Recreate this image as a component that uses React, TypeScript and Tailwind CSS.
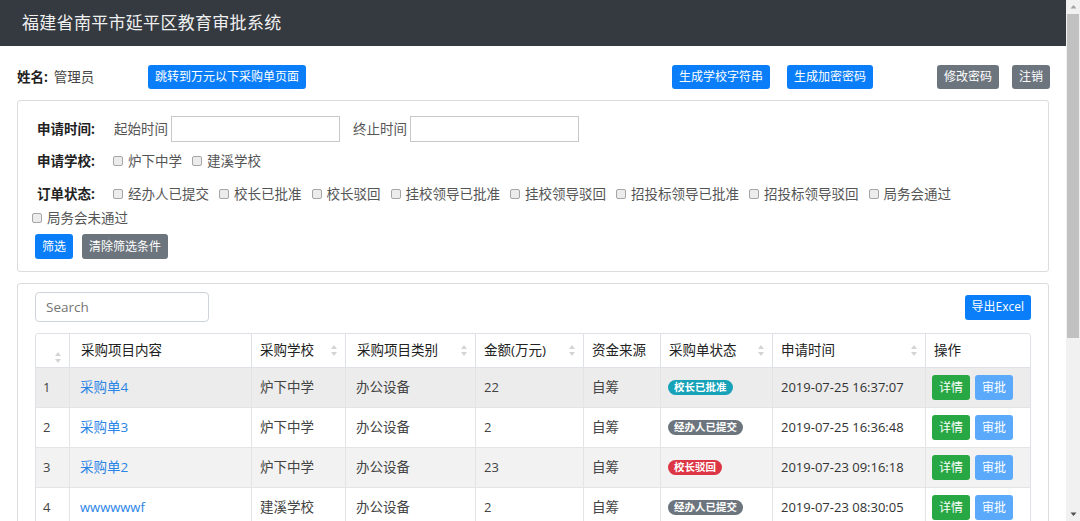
import React from "react";

const FONT = { fontFamily: '"Open Sans", "Noto Sans CJK SC", sans-serif' };

function Checkbox() {
  return <span className="inline-block w-[10px] h-[10px] border border-[#a6a6a6] rounded-[2px] bg-[#ececec] shrink-0" />;
}

function CheckItem({ label }: { label: string }) {
  return (
    <span className="flex items-center mr-[10px] h-[24px]">
      <Checkbox />
      <span className="ml-[5px]">{label}</span>
    </span>
  );
}

function SortIcon() {
  return (
    <svg width="6" height="11" viewBox="0 0 6 11" className="shrink-0">
      <path d="M3 0 L6 4 L0 4 Z" fill="#d4d4d4" />
      <path d="M3 11 L6 7 L0 7 Z" fill="#d4d4d4" />
    </svg>
  );
}

function Btn({ children, color, className = "" }: { children: React.ReactNode; color: string; className?: string }) {
  return (
    <span className={`inline-flex items-center justify-center px-[7px] rounded-[3px] text-white text-[12px] leading-none ${color} ${className}`}>
      {children}
    </span>
  );
}

const columns = [
  { title: "", w: "w-[33px]", sort: true },
  { title: "采购项目内容", w: "w-[182px]", sort: false },
  { title: "采购学校", w: "w-[94px]", sort: true },
  { title: "采购项目类别", w: "w-[130px]", sort: true },
  { title: "金额(万元)", w: "w-[108px]", sort: true },
  { title: "资金来源", w: "w-[77px]", sort: false },
  { title: "采购单状态", w: "w-[112px]", sort: true },
  { title: "申请时间", w: "w-[153px]", sort: true },
  { title: "操作", w: "w-[105px]", sort: false },
];

const rows = [
  { no: 1, name: "采购单4", school: "炉下中学", type: "办公设备", amount: "22", src: "自筹", status: "校长已批准", badge: "bg-[#17a2b8]", time: "2019-07-25 16:37:07", bg: "bg-[#ececec]" },
  { no: 2, name: "采购单3", school: "炉下中学", type: "办公设备", amount: "2", src: "自筹", status: "经办人已提交", badge: "bg-[#6c757d]", time: "2019-07-25 16:36:48", bg: "bg-white" },
  { no: 3, name: "采购单2", school: "炉下中学", type: "办公设备", amount: "23", src: "自筹", status: "校长驳回", badge: "bg-[#dc3545]", time: "2019-07-23 09:16:18", bg: "bg-[#f2f2f2]" },
  { no: 4, name: "wwwwwwf", school: "建溪学校", type: "办公设备", amount: "2", src: "自筹", status: "经办人已提交", badge: "bg-[#6c757d]", time: "2019-07-23 08:30:05", bg: "bg-white" },
];

const statuses = ["经办人已提交", "校长已批准", "校长驳回", "挂校领导已批准", "挂校领导驳回", "招投标领导已批准", "招投标领导驳回", "局务会通过", "局务会未通过"];

export default function App() {
  return (
    <div className="flex w-[1080px] h-[521px] overflow-hidden bg-white text-[#333]" style={FONT}>
      <div className="flex-1 min-w-0 flex flex-col">
        {/* Header */}
        <div className="h-[46px] bg-[#343a40] flex items-center pl-[22px] shrink-0">
          <span className="text-[17px] text-[#f0f0f0] tracking-[0.3px]">福建省南平市延平区教育审批系统</span>
        </div>

        <div className="px-[17px]">
          {/* User bar */}
          <div className="flex items-center h-[24px] mt-[19px] text-[13.5px]">
            <span className="w-[131px] flex items-center">
              <b className="font-bold text-[#222]">姓名:</b>
              <span className="ml-[6px] text-[#444]">管理员</span>
            </span>
            <Btn color="bg-[#0a7ef8]" className="h-[24px] px-[6px]">跳转到万元以下采购单页面</Btn>
            <div className="flex-1" />
            <Btn color="bg-[#0a7ef8]" className="h-[24px]">生成学校字符串</Btn>
            <Btn color="bg-[#0a7ef8]" className="h-[24px] ml-[17px]">生成加密密码</Btn>
            <Btn color="bg-[#6c757d]" className="h-[24px] ml-[64px]">修改密码</Btn>
            <Btn color="bg-[#6c757d]" className="h-[24px] ml-[13px] mr-[-1px]">注销</Btn>
          </div>

          {/* Filter card */}
          <div className="mt-[11px] border border-[#dcdcdc] rounded-[3px] pl-[14px] pr-[14px] pt-[15px] pb-[12px] text-[13.5px] text-[#555]">
            <div className="flex items-center h-[26px] pl-[5px]">
              <b className="w-[77px] font-bold text-[#222]">申请时间:</b>
              <span>起始时间</span>
              <span className="ml-[3px] w-[169px] h-[26px] border border-[#c8c8c8] bg-white" />
              <span className="ml-[13px]">终止时间</span>
              <span className="ml-[3px] w-[169px] h-[26px] border border-[#c8c8c8] bg-white" />
            </div>
            <div className="flex items-center h-[24px] mt-[7px] pl-[5px]">
              <b className="w-[76px] font-bold text-[#222]">申请学校:</b>
              <CheckItem label="炉下中学" />
              <CheckItem label="建溪学校" />
            </div>
            <div className="flex flex-wrap items-center mt-[9px]">
              <b className="w-[81px] pl-[5px] font-bold text-[#222] h-[24px] flex items-center">订单状态:</b>
              {statuses.map((s) => (
                <CheckItem key={s} label={s} />
              ))}
            </div>
            <div className="flex items-center mt-[4px] pl-[3px]">
              <Btn color="bg-[#0a7ef8]" className="h-[25px]">筛选</Btn>
              <Btn color="bg-[#6c757d]" className="h-[25px] ml-[9px]">清除筛选条件</Btn>
            </div>
          </div>

          {/* Table card */}
          <div className="mt-[11px] border border-[#dcdcdc] rounded-[3px] px-[17px] pt-[8px] pb-[20px]">
            <div className="flex items-center justify-between">
              <div className="w-[174px] h-[30px] border border-[#ced4da] rounded-[4px] flex items-center pl-[10px] text-[13.5px] text-[#757575]">
                Search
              </div>
              <Btn color="bg-[#0a7ef8]" className="h-[25px] text-[12.5px]">导出Excel</Btn>
            </div>

            <div className="mt-[11px] border border-[#dee2e6] rounded-[3px]">
              <div className="flex h-[34px] border-b border-[#dee2e6] text-[13.5px] text-[#222]">
                {columns.map((c, i) => (
                  <div
                    key={i}
                    className={`${c.w} shrink-0 flex justify-between pl-[8px] pr-[8px] ${i > 0 ? "border-l border-[#dee2e6]" : ""} ${i === 0 ? "items-end pb-[4px] pr-[5px] justify-end" : "items-center"}`}
                  >
                    {c.title && <span className={i === 1 || i === 3 ? "pl-[3px]" : ""}>{c.title}</span>}
                    {c.sort && <SortIcon />}
                  </div>
                ))}
              </div>
              {rows.map((r) => (
                <div key={r.no} className={`flex h-[40px] border-b border-[#e4e4e4] text-[13.5px] text-[#444] ${r.bg}`}>
                  <div className={`${columns[0].w} shrink-0 flex items-center pl-[7px] text-[13px]`}>{r.no}</div>
                  <div className={`${columns[1].w} shrink-0 flex items-center pl-[10px] border-l border-[#e4e4e4] text-[#2a84e6] ${r.no === 4 ? "text-[13px]" : ""}`}>{r.name}</div>
                  <div className={`${columns[2].w} shrink-0 flex items-center pl-[8px] border-l border-[#e4e4e4]`}>{r.school}</div>
                  <div className={`${columns[3].w} shrink-0 flex items-center pl-[10px] border-l border-[#e4e4e4]`}>{r.type}</div>
                  <div className={`${columns[4].w} shrink-0 flex items-center pl-[8px] border-l border-[#e4e4e4] text-[13px]`}>{r.amount}</div>
                  <div className={`${columns[5].w} shrink-0 flex items-center pl-[8px] border-l border-[#e4e4e4]`}>{r.src}</div>
                  <div className={`${columns[6].w} shrink-0 flex items-center pl-[7px] border-l border-[#e4e4e4]`}>
                    <span className={`${r.badge} text-white font-bold text-[10.5px] leading-none rounded-full px-[6px] h-[15px] flex items-center`}>{r.status}</span>
                  </div>
                  <div className={`${columns[7].w} shrink-0 flex items-center pl-[8px] border-l border-[#e4e4e4] text-[13px] text-[#333]`}>{r.time}</div>
                  <div className={`${columns[8].w} shrink-0 flex items-center pl-[6px] gap-[5px] border-l border-[#e4e4e4]`}>
                    <Btn color="bg-[#28a745]" className="h-[25px] text-[12.5px] w-[38px] px-0">详情</Btn>
                    <Btn color="bg-[#5aa9fb]" className="h-[25px] text-[12.5px] w-[38px] px-0">审批</Btn>
                  </div>
                </div>
              ))}
            </div>
          </div>
        </div>
      </div>

      {/* Scrollbar */}
      <div className="w-[14px] shrink-0 bg-[#f1f1f1] flex flex-col items-center">
        <svg width="7" height="14" viewBox="0 0 7 14" className="shrink-0">
          <path d="M3.5 5 L6.5 8.5 L0.5 8.5 Z" fill="#a3a3a3" />
        </svg>
        <div className="w-[12px] h-[324px] bg-[#c1c1c1]" />
        <div className="flex-1" />
        <svg width="7" height="14" viewBox="0 0 7 14" className="shrink-0">
          <path d="M3.5 9 L6.5 5.5 L0.5 5.5 Z" fill="#505050" />
        </svg>
      </div>
    </div>
  );
}
